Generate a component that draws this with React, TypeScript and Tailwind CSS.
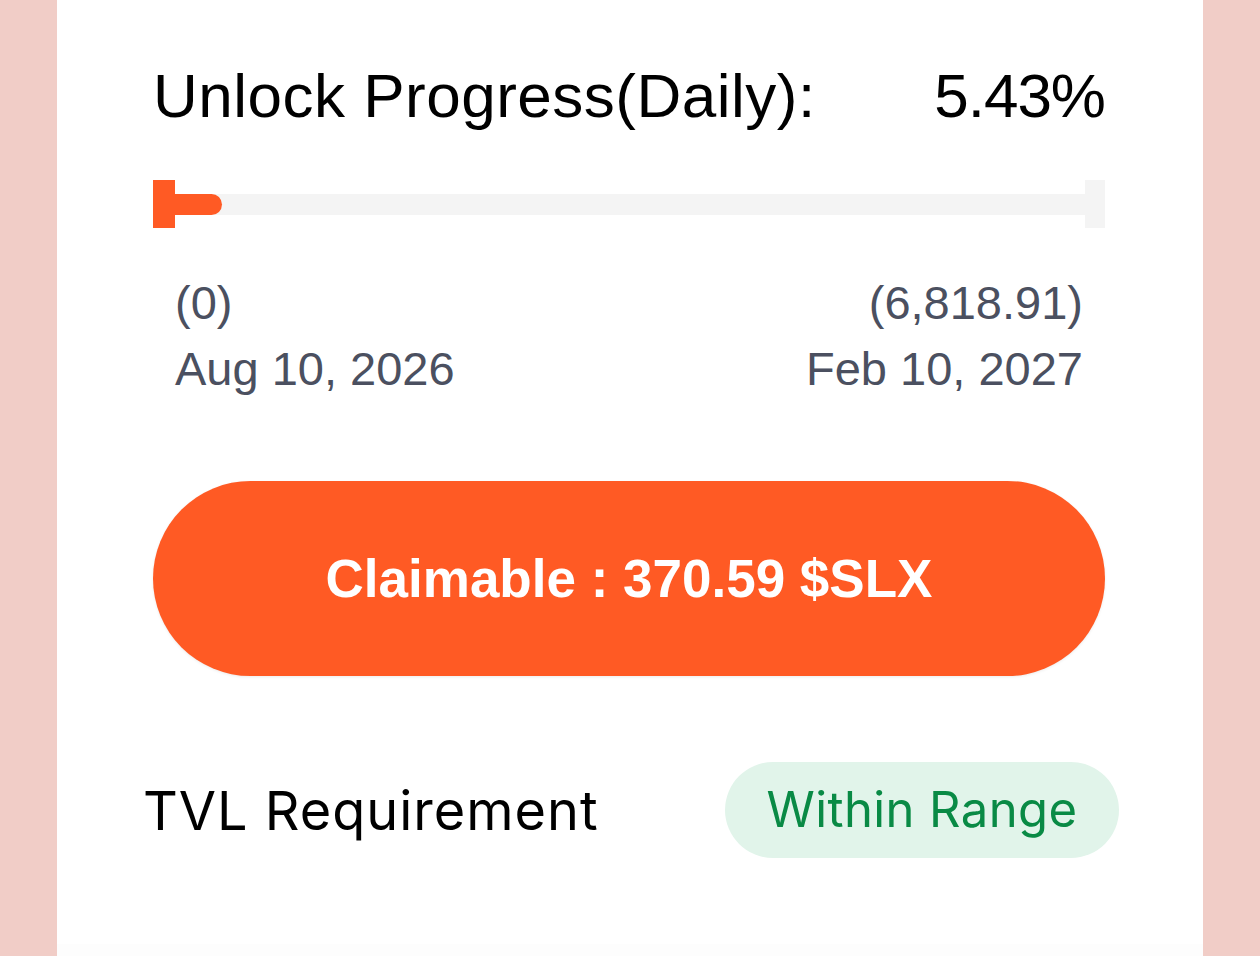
const sans = { fontFamily: '"Liberation Sans", Arial, sans-serif' };
const inter = { fontFamily: 'Inter, "Noto Sans", sans-serif' };

function ProgressTrack({ pct }: { pct: number }) {
  return (
    <div className="flex items-center h-[48px]">
      <div className="w-[22px] h-[48px] bg-[#ff5a24] shrink-0" />
      <div className="relative flex-1 h-[21px] bg-[#f4f4f4]">
        <div
          className="absolute left-0 top-0 h-full bg-[#ff5a24] rounded-r-full"
          style={{ width: `${pct}%` }}
        />
      </div>
      <div className="w-[20px] h-[48px] bg-[#f4f4f4] shrink-0" />
    </div>
  );
}

export default function App() {
  return (
    <div className="w-[1260px] h-[956px] bg-[#f1cdc7] flex justify-center overflow-hidden">
      <div className="w-[1146px] h-full bg-white flex flex-col">
        <div className="pl-[96px] pr-[98px] pt-[58px]">
          <div className="flex justify-between items-center text-black text-[62px] leading-[76px]" style={sans}>
            <span className="tracking-[0.5px]">Unlock Progress(Daily):</span>
            <span className="tracking-[-1px]">5.43%</span>
          </div>

          <div className="mt-[46px]">
            <ProgressTrack pct={5.2} />
          </div>

          <div className="flex justify-between px-[22px] mt-[42px] text-[#4b5060] text-[47px] leading-[66px]" style={sans}>
            <div className="flex flex-col">
              <span>(0)</span>
              <span>Aug 10, 2026</span>
            </div>
            <div className="flex flex-col items-end">
              <span>(6,818.91)</span>
              <span>Feb 10, 2027</span>
            </div>
          </div>

          <button
            className="mt-[79px] w-full h-[195px] rounded-full bg-[#ff5a24] text-white font-bold text-[53px] flex items-center justify-center shadow-[0_1px_3px_rgba(0,0,0,0.08)]"
            style={sans}
          >
            Claimable : 370.59 $SLX
          </button>
        </div>

        <div className="flex justify-between items-center pl-[86px] pr-[84px] mt-[86px]">
          <span className="text-black text-[54px] tracking-[1px]" style={inter}>
            TVL Requirement
          </span>
          <span
            className="h-[96px] w-[394px] rounded-full bg-[#e1f4ea] text-[#098a45] text-[49px] tracking-[0.4px] flex items-center justify-center"
            style={inter}
          >
            Within Range
          </span>
        </div>

        <div className="flex-1 mt-[86px] bg-[#fdfdfd]" />
      </div>
    </div>
  );
}
